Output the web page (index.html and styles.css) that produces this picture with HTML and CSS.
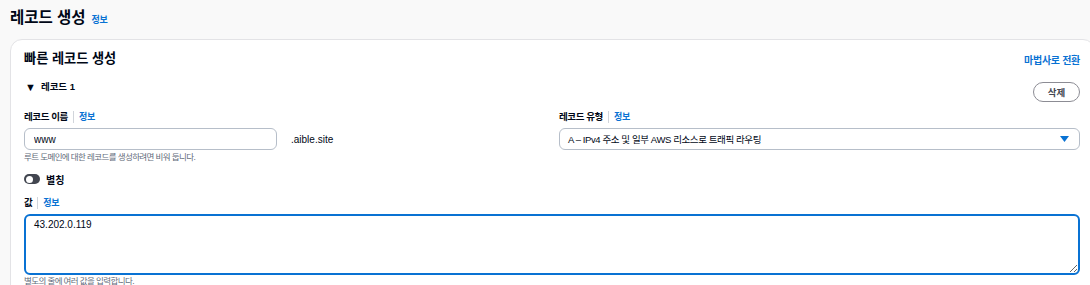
FILE: index.html
```html
<!DOCTYPE html>
<html lang="ko">
<head>
  <meta charset="UTF-8" />
  <meta name="viewport" content="width=device-width, initial-scale=1.0"/>
  <title>레코드 생성</title>
  <link rel="stylesheet" href="styles.css">
</head>
<body>

  <header class="page-header">
    <h1>레코드 생성</h1>
    <a href="#" class="info">정보</a>
  </header>

  <section class="card">
    <div class="card-head">
      <h2>빠른 레코드 생성</h2>
      <a href="#" class="switch-link">마법사로 전환</a>
    </div>

    <div class="record-head">
      <span class="caret">▼</span>
      <span class="record-title">레코드 1</span>
      <button class="btn-delete">삭제</button>
    </div>

    <div class="fields">
      <div class="field">
        <div class="label">레코드 이름<span class="sep"></span><a href="#" class="info">정보</a></div>
        <div class="name-row">
          <input type="text" class="input name-input" value="www">
          <span class="suffix">.aible.site</span>
        </div>
        <div class="hint">루트 도메인에 대한 레코드를 생성하려면 비워 둡니다.</div>
      </div>
      <div class="field">
        <div class="label">레코드 유형<span class="sep"></span><a href="#" class="info">정보</a></div>
        <div class="select">
          <span>A – IPv4 주소 및 일부 AWS 리소스로 트래픽 라우팅</span>
          <svg width="9" height="6" viewBox="0 0 9 6"><path d="M0 0h9L4.5 6z" fill="#0972d3"/></svg>
        </div>
      </div>
    </div>

    <div class="toggle-row">
      <span class="toggle"><span class="knob"></span></span>
      <span>별칭</span>
    </div>

    <div class="field">
      <div class="label">값<span class="sep"></span><a href="#" class="info">정보</a></div>
      <textarea class="value-box">43.202.0.119</textarea>
      <div class="hint">별도의 줄에 여러 값을 입력합니다.</div>
    </div>
  </section>

</body>
</html>
```

FILE: styles.css
```css
body {
  font-family: "Liberation Sans", "Noto Sans CJK KR", sans-serif;
  margin: 0;
  padding: 0 0 0 10px;
  background: #f9f9f9;
  color: #000716;
  overflow: hidden;
}
a {
  text-decoration: none;
}
.info {
  color: #0972d3;
  font-size: 9px;
  font-weight: 700;
  letter-spacing: -0.3px;
}
.page-header {
  height: 39px;
  display: flex;
  align-items: baseline;
  gap: 6px;
  padding-top: 8px;
  box-sizing: border-box;
}
.page-header h1 {
  margin: 0;
  font-size: 15.5px;
  line-height: 20px;
  font-weight: 700;
}
.card {
  width: 1056px;
  background: #fff;
  border: 1px solid #e3e3e6;
  border-radius: 12px;
  padding: 5px 14px 0 13px;
  height: 260px;
}
.card-head {
  display: flex;
  justify-content: space-between;
  align-items: center;
  height: 24px;
}
.card-head h2 {
  margin: 0;
  font-size: 13.2px;
  font-weight: 700;
}
.switch-link {
  color: #0972d3;
  font-size: 10px;
  font-weight: 700;
  letter-spacing: -0.3px;
  margin-top: 4px;
}
.record-head {
  display: flex;
  align-items: flex-start;
  margin-top: 11px;
  font-size: 9.5px;
  font-weight: 700;
  line-height: 14px;
}
.caret {
  font-size: 11px;
  margin: 0 5px 0 1px;
}
.btn-delete {
  margin-left: auto;
  margin-top: 2px;
  height: 20px;
  width: 47px;
  border: 1px solid #8c8c94;
  border-radius: 10px;
  background: #fff;
  color: #424650;
  font-family: inherit;
  font-size: 9.5px;
  font-weight: 700;
  padding: 0;
}
.fields {
  display: grid;
  grid-template-columns: 1fr 1fr;
  gap: 14px;
  margin-top: 8px;
}
.label {
  display: flex;
  align-items: center;
  font-size: 9.5px;
  font-weight: 700;
  letter-spacing: -0.4px;
  line-height: 14px;
  margin-bottom: 4px;
}
.sep {
  width: 1px;
  height: 12px;
  background: #d1d5db;
  margin: 0 5px;
}
.name-row {
  display: flex;
  align-items: center;
  gap: 14px;
}
.input, .select {
  height: 22px;
  box-sizing: border-box;
  border: 1px solid #b6bec9;
  border-radius: 6px;
  font-family: inherit;
  font-size: 10px;
  color: #000716;
  background: #fff;
}
.name-input {
  width: 253px;
  padding: 0 9px;
}
.suffix {
  font-size: 10px;
}
.select {
  display: flex;
  align-items: center;
  justify-content: space-between;
  padding: 0 10px 0 8px;
  font-size: 9.5px;
  letter-spacing: -0.4px;
}
.hint {
  font-size: 8.5px;
  letter-spacing: -0.6px;
  color: #5f6b7a;
  line-height: 12px;
  margin-top: 1px;
}
.toggle-row {
  display: flex;
  align-items: center;
  gap: 6px;
  height: 16px;
  margin-top: 8px;
  font-size: 10px;
  font-weight: 700;
}
.toggle {
  width: 16px;
  height: 10px;
  border-radius: 5px;
  background: #424650;
  display: flex;
  align-items: center;
  padding-left: 1.5px;
  box-sizing: border-box;
}
.knob {
  width: 7px;
  height: 7px;
  border-radius: 50%;
  background: #fff;
}
.toggle-row + .field {
  margin-top: 9px;
}
.value-box {
  display: block;
  width: 100%;
  height: 61px;
  box-sizing: border-box;
  border: 2px solid #0972d3;
  border-radius: 6px;
  padding: 3px 8px;
  font-family: inherit;
  font-size: 10px;
  color: #000716;
  resize: vertical;
  outline: none;
}
.field .value-box + .hint {
  margin-top: 0;
}
```
